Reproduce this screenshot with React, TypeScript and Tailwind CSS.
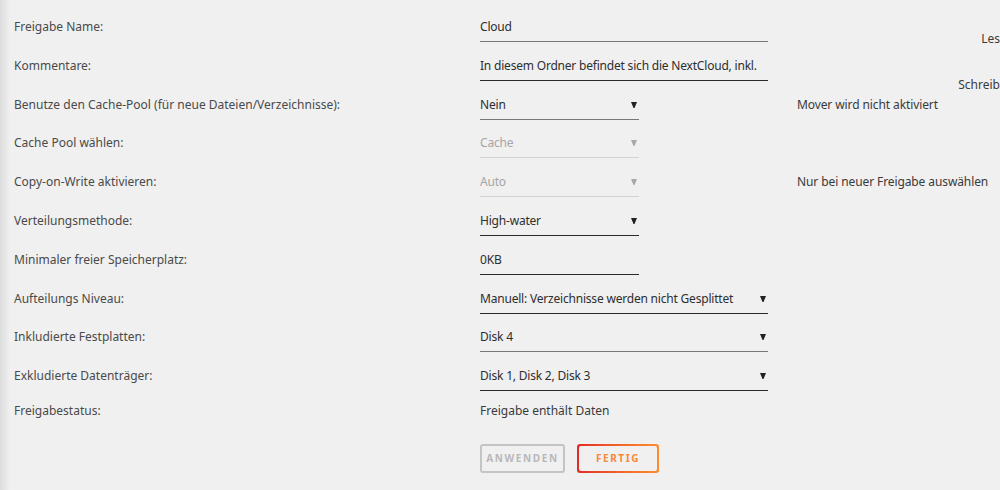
import React from 'react';

type Row = {
  label: string;
  value: string;
  kind: 'input' | 'select';
  size: 'short' | 'long';
  disabled?: boolean;
  line?: 'gray' | 'dark';
  note?: string;
};

const rows: Row[] = [
  { label: 'Freigabe Name:', value: 'Cloud', kind: 'input', size: 'long' },
  { label: 'Kommentare:', value: 'In diesem Ordner befindet sich die NextCloud, inkl.', kind: 'input', size: 'long', line: 'dark' },
  { label: 'Benutze den Cache-Pool (für neue Dateien/Verzeichnisse):', value: 'Nein', kind: 'select', size: 'short', note: 'Mover wird nicht aktiviert' },
  { label: 'Cache Pool wählen:', value: 'Cache', kind: 'select', size: 'short', disabled: true },
  { label: 'Copy-on-Write aktivieren:', value: 'Auto', kind: 'select', size: 'short', disabled: true, note: 'Nur bei neuer Freigabe auswählen' },
  { label: 'Verteilungsmethode:', value: 'High-water', kind: 'select', size: 'short', line: 'dark' },
  { label: 'Minimaler freier Speicherplatz:', value: '0KB', kind: 'input', size: 'short', line: 'dark' },
  { label: 'Aufteilungs Niveau:', value: 'Manuell: Verzeichnisse werden nicht Gesplittet', kind: 'select', size: 'long', line: 'dark' },
  { label: 'Inkludierte Festplatten:', value: 'Disk 4', kind: 'select', size: 'long' },
  { label: 'Exkludierte Datenträger:', value: 'Disk 1, Disk 2, Disk 3', kind: 'select', size: 'long', line: 'dark' },
];

const Caret = ({ muted }: { muted?: boolean }) => (
  <svg width="6" height="6" viewBox="0 0 6 6" className="flex-none">
    <polygon points="0,0 6,0 3.5,6 2.5,6" fill={muted ? '#a8a8a8' : '#222'} />
  </svg>
);

function Field({ row }: { row: Row }) {
  const width = row.size === 'short' ? 'w-[159px]' : 'w-[288px]';
  const border = row.disabled
    ? 'border-[#d2d2d2]'
    : row.line === 'dark'
      ? 'border-[#2a2a2a]'
      : 'border-[#777]';
  const color = row.disabled ? 'text-[#a6a6a6]' : 'text-[#2e2e2e]';
  return (
    <div className={`${width} h-[29px] flex items-center justify-between pr-[2px] border-b-[1.5px] ${border} ${color}`}>
      <span className="leading-[28px] whitespace-nowrap tracking-[-0.2px]">{row.value}</span>
      {row.kind === 'select' && <Caret muted={row.disabled} />}
    </div>
  );
}

export default function App() {
  return (
    <div className="w-[1000px] h-[490px] overflow-hidden bg-[#f0f0f0] flex text-[12px] font-['Noto_Sans',sans-serif]">
      <div className="w-[10px] flex-none bg-gradient-to-r from-[#dcdcdc] to-[#f0f0f0]" />
      <div className="w-[930px] flex-none pt-[13px] pl-[4px]">
        {rows.map((row) => (
          <div key={row.label} className="h-[38.8px] flex items-start">
            <div className="w-[466px] flex-none leading-[28px] text-[#4a4a4a] whitespace-nowrap">{row.label}</div>
            <div className="w-[317px] flex-none">
              <Field row={row} />
            </div>
            {row.note && <div className="leading-[28px] text-[#3a3a3a] whitespace-nowrap tracking-[-0.1px]">{row.note}</div>}
          </div>
        ))}
        <div className="flex items-start -mt-[4px]">
          <div className="w-[466px] flex-none leading-[28px] text-[#4a4a4a]">Freigabestatus:</div>
          <div className="leading-[28px] text-[#3a3a3a]">Freigabe enthält Daten</div>
        </div>
        <div className="flex gap-[12px] mt-[19px] ml-[466px]">
          <button className="w-[85px] h-[29px] rounded-[3px] border-2 border-[#c4c4c4] text-[#b8b8b8] text-[10px] font-bold tracking-[1.6px]">
            ANWENDEN
          </button>
          <div className="w-[82px] h-[29px] rounded-[3px] p-[2px] bg-gradient-to-r from-[#e22828] to-[#ff8c2f]">
            <button className="w-full h-full rounded-[2px] bg-[#f0f0f0] text-[#f7883a] text-[10px] font-bold tracking-[1.6px]">
              FERTIG
            </button>
          </div>
        </div>
      </div>
      <div className="flex-1 pt-[25px] flex flex-col items-end text-[#3a3a3a] leading-[28px] whitespace-nowrap">
        <div>Les</div>
        <div className="mt-[18px]">Schreib</div>
      </div>
    </div>
  );
}
